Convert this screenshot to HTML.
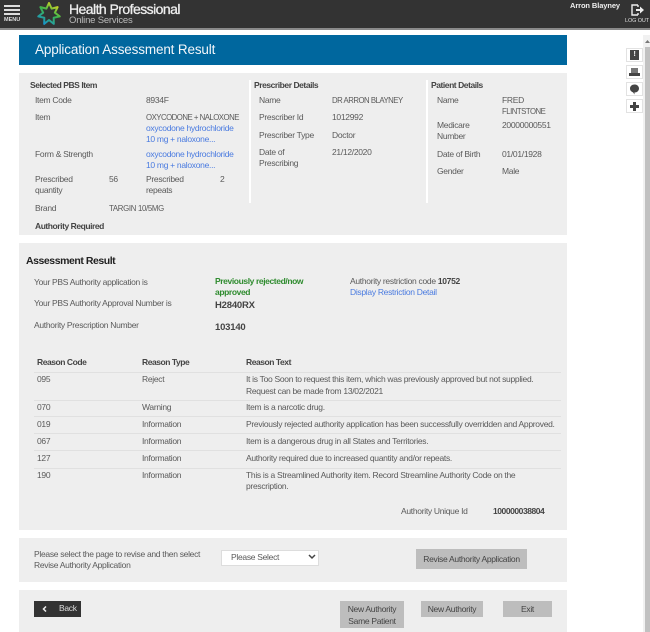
<!DOCTYPE html>
<html><head><meta charset="utf-8"><style>
html,body{margin:0;padding:0;background:#fff;width:650px;height:632px;overflow:hidden}
body{position:relative;font-family:"Liberation Sans",sans-serif;font-size:8.5px;color:#5a5a5a;letter-spacing:-.3px}
.t{position:absolute;line-height:11px;white-space:nowrap;filter:blur(.25px)}
.b{font-weight:bold;color:#444;letter-spacing:-.45px}
.l{color:#4a7be0}
.u{font-size:7.8px;letter-spacing:-.5px}
.p{position:absolute;left:19px;width:548px;background:#eee}
.r{position:absolute;left:34px;width:527px;height:1px;background:#e0e0e0}
.btn{position:absolute;background:#bdbdbd;color:#444;text-align:center;line-height:11px;font-size:8.5px;filter:blur(.2px)}
.ic{position:absolute;left:626px;width:15px;height:12px;border:1px solid #e2e2e2;background:#fff}
</style></head><body>
<div style="position:absolute;left:0;top:0;width:650px;height:28px;background:#333"></div>
<div style="position:absolute;left:0;top:28px;width:650px;height:2px;background:#8a8a8a"></div>
<div style="position:absolute;left:4px;top:5px;width:16px;height:2px;background:#ddd"></div>
<div style="position:absolute;left:4px;top:9px;width:16px;height:2px;background:#ddd"></div>
<div style="position:absolute;left:4px;top:13px;width:16px;height:2px;background:#ddd"></div>
<div class="t" style="left:4px;top:15px;font-size:5.5px;font-weight:bold;color:#ddd;letter-spacing:0">MENU</div>
<svg style="position:absolute;left:37px;top:2px" width="24" height="24" viewBox="0 0 24 24"><defs><linearGradient id="g" x1="0.8" y1="0" x2="0.2" y2="1"><stop offset="0" stop-color="#e6d81e"/><stop offset=".45" stop-color="#3fb54a"/><stop offset="1" stop-color="#1592d2"/></linearGradient></defs><polygon points="12,1 14.6,6.6 20.6,5.15 17.85,10.66 22.7,14.45 16.7,15.74 16.8,21.9 12,18 7.2,21.9 7.3,15.74 1.3,14.45 6.15,10.66 3.4,5.15 9.4,6.6" fill="none" stroke="url(#g)" stroke-width="2" stroke-linejoin="round"/></svg>
<div class="t" style="left:69px;top:3px;font-size:14px;line-height:13px;color:#eee;letter-spacing:-.55px;-webkit-text-stroke:.3px #eee">Health Professional</div>
<div class="t" style="left:69px;top:15px;font-size:9.5px;color:#bbb;letter-spacing:-.2px">Online Services</div>
<div class="t" style="left:570px;top:0;font-size:7.5px;font-weight:bold;color:#eee;letter-spacing:-.1px">Arron Blayney</div>
<svg style="position:absolute;left:631px;top:4px" width="14" height="12" viewBox="0 0 14 12"><path d="M7 1H1v10h6M7 1v2M7 11V9" fill="none" stroke="#eee" stroke-width="1.4"/><path d="M5 5h4V2.500L13 6l-4 3.500V7H5z" fill="#eee"/></svg>
<div class="t" style="left:625px;top:16px;font-size:5.5px;color:#ddd;letter-spacing:-.1px">LOG OUT</div>

<div style="position:absolute;left:19px;top:35px;width:548px;height:30px;background:#00679e"></div>
<div class="t" style="left:35px;top:44px;font-size:13.500px;color:#f2f6fa;letter-spacing:-.15px">Application Assessment Result</div>

<div class="p" style="top:73px;height:162px"></div>
<div style="position:absolute;left:249px;top:80px;width:2px;height:123px;background:#fff"></div>
<div style="position:absolute;left:426px;top:80px;width:2px;height:123px;background:#fff"></div>
<div class="t b" style="left:30px;top:80px">Selected PBS Item</div>
<div class="t" style="left:35px;top:95px">Item Code</div><div class="t" style="left:146px;top:95px">8934F</div>
<div class="t" style="left:35px;top:112px">Item</div><div class="t u" style="left:146px;top:112px">OXYCODONE + NALOXONE</div>
<div class="t l" style="left:146px;top:123px">oxycodone hydrochloride</div><div class="t l" style="left:146px;top:134px">10 mg + naloxone...</div>
<div class="t" style="left:35px;top:149px">Form &amp; Strength</div>
<div class="t l" style="left:146px;top:149px">oxycodone hydrochloride</div><div class="t l" style="left:146px;top:160px">10 mg + naloxone...</div>
<div class="t" style="left:35px;top:174px">Prescribed</div><div class="t" style="left:35px;top:185px">quantity</div>
<div class="t" style="left:109px;top:174px">56</div>
<div class="t" style="left:146px;top:174px">Prescribed</div><div class="t" style="left:146px;top:185px">repeats</div>
<div class="t" style="left:220px;top:174px">2</div>
<div class="t" style="left:35px;top:203px">Brand</div><div class="t u" style="left:109px;top:203px;letter-spacing:-.3px">TARGIN 10/5MG</div>
<div class="t b" style="left:35px;top:221px">Authority Required</div>

<div class="t b" style="left:254px;top:80px">Prescriber Details</div>
<div class="t" style="left:259px;top:95px">Name</div><div class="t u" style="left:332px;top:95px">DR ARRON BLAYNEY</div>
<div class="t" style="left:259px;top:112px">Prescriber Id</div><div class="t" style="left:332px;top:112px">1012992</div>
<div class="t" style="left:259px;top:130px">Prescriber Type</div><div class="t" style="left:332px;top:130px">Doctor</div>
<div class="t" style="left:259px;top:147px">Date of</div><div class="t" style="left:259px;top:158px">Prescribing</div><div class="t" style="left:332px;top:147px">21/12/2020</div>

<div class="t b" style="left:431px;top:80px">Patient Details</div>
<div class="t" style="left:437px;top:95px">Name</div><div class="t" style="left:502px;top:95px">FRED</div><div class="t u" style="left:502px;top:106px">FLINTSTONE</div>
<div class="t" style="left:437px;top:120px">Medicare</div><div class="t" style="left:437px;top:131px">Number</div><div class="t" style="left:502px;top:120px">20000000551</div>
<div class="t" style="left:437px;top:149px">Date of Birth</div><div class="t" style="left:502px;top:149px">01/01/1928</div>
<div class="t" style="left:437px;top:166px">Gender</div><div class="t" style="left:502px;top:166px">Male</div>

<div class="p" style="top:243px;height:287px"></div>
<div class="t" style="left:26px;top:256px;font-size:10.5px;font-weight:bold;color:#222;letter-spacing:-.45px">Assessment Result</div>
<div class="t" style="left:34px;top:277px">Your PBS Authority application is</div>
<div class="t" style="left:215px;top:276px;font-weight:bold;color:#2e8b2e;letter-spacing:-.4px">Previously rejected/now</div>
<div class="t" style="left:215px;top:287px;font-weight:bold;color:#2e8b2e;letter-spacing:-.4px">approved</div>
<div class="t" style="left:350px;top:276px">Authority restriction code <b style="color:#444">10752</b></div>
<div class="t l" style="left:350px;top:287px">Display Restriction Detail</div>
<div class="t" style="left:34px;top:298px">Your PBS Authority Approval Number is</div>
<div class="t b" style="left:215px;top:300px;font-size:9.500px;letter-spacing:-.2px">H2840RX</div>
<div class="t" style="left:34px;top:320px">Authority Prescription Number</div>
<div class="t b" style="left:215px;top:322px;font-size:9.500px;letter-spacing:-.2px">103140</div>

<div class="t b" style="left:37px;top:357px">Reason Code</div><div class="t b" style="left:142px;top:357px">Reason Type</div><div class="t b" style="left:246px;top:357px">Reason Text</div>
<div class="r" style="top:372px"></div>
<div class="t" style="left:37px;top:374px">095</div><div class="t" style="left:142px;top:374px">Reject</div>
<div class="t" style="left:246px;top:374px">It is Too Soon to request this item, which was previously approved but not supplied.</div>
<div class="t" style="left:246px;top:386px">Request can be made from 13/02/2021</div>
<div class="r" style="top:400px"></div>
<div class="t" style="left:37px;top:402px">070</div><div class="t" style="left:142px;top:402px">Warning</div><div class="t" style="left:246px;top:402px">Item is a narcotic drug.</div>
<div class="r" style="top:416px"></div>
<div class="t" style="left:37px;top:419px">019</div><div class="t" style="left:142px;top:419px">Information</div><div class="t" style="left:246px;top:419px">Previously rejected authority application has been successfully overridden and Approved.</div>
<div class="r" style="top:433px"></div>
<div class="t" style="left:37px;top:436px">067</div><div class="t" style="left:142px;top:436px">Information</div><div class="t" style="left:246px;top:436px">Item is a dangerous drug in all States and Territories.</div>
<div class="r" style="top:450px"></div>
<div class="t" style="left:37px;top:453px">127</div><div class="t" style="left:142px;top:453px">Information</div><div class="t" style="left:246px;top:453px">Authority required due to increased quantity and/or repeats.</div>
<div class="r" style="top:468px"></div>
<div class="t" style="left:37px;top:470px">190</div><div class="t" style="left:142px;top:470px">Information</div><div class="t" style="left:246px;top:470px">This is a Streamlined Authority item. Record Streamline Authority Code on the</div>
<div class="t" style="left:246px;top:481px">prescription.</div>
<div class="t" style="left:401px;top:506px">Authority Unique Id</div><div class="t b" style="left:493px;top:506px">100000038804</div>

<div class="p" style="top:538px;height:44px"></div>
<div class="t" style="left:34px;top:549px">Please select the page to revise and then select</div>
<div class="t" style="left:34px;top:560px">Revise Authority Application</div>
<div style="position:absolute;left:221px;top:550px;width:96px;height:14px;background:#fff;border:1px solid #ddd"></div>
<div class="t" style="left:231px;top:552px">Please Select</div>
<svg style="position:absolute;left:308px;top:554px" width="8" height="6" viewBox="0 0 8 6"><path d="M1 1l3 3 3-3" fill="none" stroke="#444" stroke-width="1.500"/></svg>
<div class="btn" style="left:416px;top:549px;width:111px;height:20px;line-height:20px">Revise Authority Application</div>

<div class="p" style="top:590px;height:42px"></div>
<div style="position:absolute;left:34px;top:601px;width:47px;height:16px;background:#333"></div>
<svg style="position:absolute;left:42px;top:606px" width="5" height="6" viewBox="0 0 5 6"><path d="M4 .5L1.500 3 4 5.500" fill="none" stroke="#eee" stroke-width="1.500"/></svg>
<div class="t" style="left:59px;top:603px;color:#ddd">Back</div>
<div class="btn" style="left:340px;top:601px;width:64px;padding-top:2px;height:25px;line-height:12px">New Authority<br>Same Patient</div>
<div class="btn" style="left:421px;top:601px;width:62px;height:16px;line-height:16px">New Authority</div>
<div class="btn" style="left:503px;top:601px;width:49px;height:16px;line-height:16px">Exit</div>

<div class="ic" style="top:48px"><div style="position:absolute;left:3px;top:1px;width:9px;height:10px;background:#444;color:#fff;font-size:7px;line-height:10px;text-align:center;font-weight:bold">!</div></div>
<div class="ic" style="top:65px"><div style="position:absolute;left:4px;top:2px;width:7px;height:5px;background:#777"></div><div style="position:absolute;left:2px;top:7px;width:11px;height:3px;background:#444"></div></div>
<div class="ic" style="top:82px"><svg style="position:absolute;left:2px;top:1px" width="11" height="11" viewBox="0 0 11 11"><path d="M5.500 0.500C8 0.500 10 2.200 10 4.500S8 8.500 5.500 8.500L5.500 10.500 4 8.300C2.500 7.800 1 6.500 1 4.500 1 2.200 3 0.500 5.500 0.500z" fill="#444"/></svg></div>
<div class="ic" style="top:99px"><div style="position:absolute;left:3px;top:5px;width:9px;height:3px;background:#444"></div><div style="position:absolute;left:6px;top:2px;width:3px;height:9px;background:#444"></div></div>

<div style="position:absolute;left:643px;top:35px;width:7px;height:597px;background:#f1f1f1"></div>
<div style="position:absolute;left:645px;top:47px;width:5px;height:585px;background:#c1c1c1"></div>
<svg style="position:absolute;left:645px;top:39px" width="5" height="4" viewBox="0 0 5 4"><path d="M0 4l2.500-3 2.500 3z" fill="#777"/></svg>
</body></html>
